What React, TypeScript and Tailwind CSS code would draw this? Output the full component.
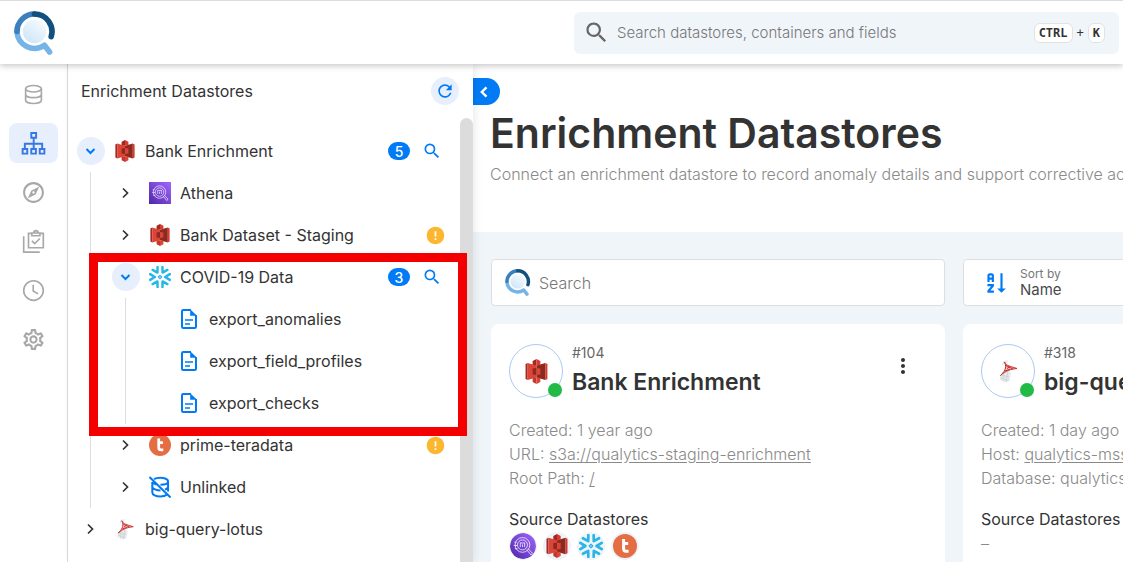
import { useId } from "react";
import type { ReactNode } from "react";
import {
  MdError,
  MdMoreVert,
  MdOutlineExplore,
  MdOutlineSettings,
  MdRefresh,
  MdSearch,
} from "react-icons/md";

type IconProps = { className?: string };

function Logo({ className }: IconProps) {
  const id = useId();
  return (
    <svg className={className} viewBox="0 0 42 44" fill="none" aria-hidden="true">
      <defs>
        <linearGradient id={id} x1="0" y1="1" x2="0.7" y2="0">
          <stop offset="0" stopColor="#c9e3f8" />
          <stop offset="1" stopColor="#f4f9fe" />
        </linearGradient>
      </defs>
      <circle cx="20.5" cy="20.5" r="11.7" fill={`url(#${id})`} />
      <g strokeWidth="5.6" strokeLinecap="round" strokeLinejoin="round">
        <path d="M3 20.5A17.5 17.5 0 0 0 30.4 34.2L35.6 41" stroke="#76b3e6" />
        <path d="M3 20.5A17.5 17.5 0 0 1 20.5 3" stroke="#3a80bf" />
        <path d="M20.5 3A17.5 17.5 0 0 1 37.2 25.6" stroke="#12507f" />
      </g>
    </svg>
  );
}

function ChevronIcon({ className, direction }: IconProps & { direction: "right" | "down" | "left" }) {
  const paths = {
    right: "M7 5.500L11.500 10L7 14.500",
    down: "M5.500 8L9.500 12L13.500 8",
    left: "M11.500 5.300L6.800 10L11.500 14.700",
  };
  return (
    <svg
      className={className}
      viewBox="0 0 20 20"
      fill="none"
      stroke="currentColor"
      strokeWidth={direction === "left" ? 2.4 : direction === "down" ? 2 : 1.7}
      aria-hidden="true"
    >
      <path d={paths[direction]} />
    </svg>
  );
}

function S3Icon({ className }: IconProps) {
  return (
    <svg className={className} viewBox="0 0 24 24" aria-hidden="true">
      <path d="M1.5 4.800L3.500 3.800V20.200L1.500 19.200Z" fill="#a5281f" />
      <path d="M22.500 4.800L20.500 3.800V20.200L22.500 19.200Z" fill="#d93a30" />
      <path d="M3.500 3.800L12 6.200V17.800L3.500 20.200Z" fill="#dd4438" />
      <path d="M20.500 3.800L12 6.200V17.800L20.500 20.200Z" fill="#8c2a20" />
      <path d="M12 0L8.300 2V5.600L12 6.400Z" fill="#a5281f" />
      <path d="M12 0L15.700 2V5.600L12 6.400Z" fill="#d93a30" />
      <path d="M12 24L8.300 22V18.400L12 17.600Z" fill="#c5362b" />
      <path d="M12 24L15.700 22V18.400L12 17.600Z" fill="#dd4438" />
      <path d="M12 8.600L8.300 9.200V14.800L12 15.400Z" fill="#8c2a20" />
      <path d="M12 8.600L15.700 9.200V14.800L12 15.400Z" fill="#dd4438" />
    </svg>
  );
}

function AthenaIcon({ className }: IconProps) {
  const id = useId();
  return (
    <svg className={className} viewBox="0 0 24 24" fill="none" aria-hidden="true">
      <defs>
        <linearGradient id={id} x1="0" y1="1" x2="1" y2="0">
          <stop offset="0" stopColor="#4d27a8" />
          <stop offset="1" stopColor="#a166ff" />
        </linearGradient>
      </defs>
      <path d="M0 0H24V24H0Z" fill={`url(#${id})`} />
      <g stroke="#f0e6ff" strokeWidth="0.8">
        <circle cx="11.500" cy="11" r="6.800" />
        <circle cx="11.500" cy="11" r="4.600" />
        <path d="M9.500 9V13M13.500 9V13M9.500 9.200H13.500M11.500 10.500V13M4 8.500H6M3.500 11.500H6.500M4.500 14.500H7" />
        <path d="M15.500 15.500L19.300 20.200L20.800 18.800L16.800 14.500" />
      </g>
    </svg>
  );
}

function TeradataIcon({ className }: IconProps) {
  return (
    <svg className={className} viewBox="0 0 24 24" aria-hidden="true">
      <circle cx="12" cy="12" r="12" fill="#e56d43" />
      <path
        d="M10.600 5V14.600Q10.600 17.300 13.300 17.300H15.600M10.600 9.400H15.200"
        fill="none"
        stroke="#fff"
        strokeWidth="3"
      />
    </svg>
  );
}

function SqlServerIcon({ className }: IconProps) {
  return (
    <svg className={className} viewBox="0 0 24 24" fill="none" aria-hidden="true">
      <path d="M8 2L12 1L10 6M5 15L12 12L15 14L13.500 22L9 23.500L3.500 20.500Z" fill="#e6eaec" />
      <path
        d="M8 2L6.500 6M5 16L13 18M4.500 18.500L12.500 21.500M8 14L7 22M12 12L10 23"
        stroke="#c5cbce"
        strokeWidth="0.700"
      />
      <path d="M8.500 3C10 7 15 7.500 21 9.500C15 10 9 12 4.500 16.500C8 12.500 11 9.500 8.500 3Z" fill="#e9b6b5" />
      <path
        d="M8.500 3C10 7 15 7.500 21 9.500C15 10 9 12 4.500 16.500C8 13 11.500 9 8.500 3M10 6.500L17 10M11 9.500L14 7.500M9 12L14 10.300"
        stroke="#c8312f"
        strokeWidth="1"
      />
    </svg>
  );
}

const snowflakeArms = [0, 60, 120, 180, 240, 300];

function SnowflakeIcon({ className }: IconProps) {
  return (
    <svg className={className} viewBox="0 0 24 24" fill="none" stroke="#29b5e8" strokeLinecap="round" strokeLinejoin="round" aria-hidden="true">
      {snowflakeArms.map((angle) => (
        <path key={angle} d="M22.700 8.900L17.600 12L22.700 15.100" strokeWidth="2.700" transform={`rotate(${angle} 12 12)`} />
      ))}
      <path d="M12 10.200L13.800 12L12 13.800L10.200 12Z" strokeWidth="1.300" />
    </svg>
  );
}

function UnlinkedIcon({ className }: IconProps) {
  return (
    <svg className={className} viewBox="0 0 24 24" fill="none" stroke="#007bf5" strokeWidth="2.200" aria-hidden="true">
      <path d="M3.600 6.500V18C3.600 20.400 7.500 22.300 12.300 22.300C15.500 22.300 18.200 21.500 19.700 20.200M5.500 3.400C7 2.400 9.500 1.800 12.300 1.800C17 1.800 20.800 3.600 20.800 5.800V17M20.800 6C20.800 8 17.500 9.500 12.500 9.600M3.600 6.500C4.500 7.800 6 8.700 8 9.200M3.600 12.500C5.500 14.800 8.500 15.800 12.500 15.800M20.800 12.200C20.200 13.400 19 14.200 17.500 14.800" />
      <path d="M0.500 1L23.500 23.500" />
    </svg>
  );
}

function FileIcon({ className }: IconProps) {
  return (
    <svg className={className} viewBox="0 0 24 24" fill="none" aria-hidden="true">
      <path d="M14 3H6.300Q5 3 5 4.300V19.700Q5 21 6.300 21H17.700Q19 21 19 19.700V8" stroke="#007bf5" strokeWidth="2" />
      <path d="M13.200 2.200L20 8.800H13.200Z" fill="#007bf5" />
      <path d="M8 13H16M8 17H13" stroke="#007bf5" strokeWidth="1.700" />
    </svg>
  );
}

function SortIcon({ className }: IconProps) {
  return (
    <svg className={className} viewBox="0 0 24 24" fill="#007bf5" aria-hidden="true">
      <path d="M19 17H22L18 21L14 17H17V3H19M11 13V15L7.670 19H11V21H5V19L8.330 15H5V13M9 3H7C5.900 3 5 3.900 5 5V11H7V9H9V11H11V5C11 3.900 10.110 3 9 3M9 7H7V5H9Z" />
    </svg>
  );
}

function DatabaseIcon({ className }: IconProps) {
  return (
    <svg className={className} viewBox="0 0 26 26" fill="none" stroke="currentColor" strokeWidth="1.700" aria-hidden="true">
      <ellipse cx="13" cy="7" rx="8.200" ry="3.400" />
      <path d="M4.800 7V19C4.800 20.900 8.500 22.300 13 22.300S21.200 20.900 21.200 19V7M4.800 13C4.800 14.900 8.500 16.300 13 16.300S21.200 14.900 21.200 13" />
    </svg>
  );
}

function SitemapIcon({ className }: IconProps) {
  return (
    <svg className={className} viewBox="0 0 26 26" fill="none" stroke="currentColor" strokeWidth="2" aria-hidden="true">
      <path d="M10.700 2H15.700V7H10.700ZM1.700 18.700H6.500V23.500H1.700ZM10.700 18.700H15.500V23.500H10.700ZM19.500 18.700H24.300V23.500H19.500ZM13.200 7.500V18.500M4 18.500V13.300H22V18.500" />
    </svg>
  );
}

function ChecksIcon({ className }: IconProps) {
  return (
    <svg className={className} viewBox="0 0 26 26" fill="none" stroke="currentColor" strokeWidth="1.700" aria-hidden="true">
      <path d="M2.800 7.500V24H19.500" />
      <path d="M11 4.500H7.800V19.500H23.200V4.500H20" />
      <path d="M11.300 4.200H19.700V7H11.300ZM13.300 4.200C13.300 0.900 17.700 0.900 17.700 4.200" />
      <path d="M11.300 12.300L14.300 15.200L19.600 9.900" />
    </svg>
  );
}

function ClockIcon({ className }: IconProps) {
  return (
    <svg className={className} viewBox="0 0 26 26" fill="none" stroke="currentColor" strokeWidth="1.700" aria-hidden="true">
      <circle cx="13" cy="13" r="10.200" />
      <path d="M12.700 7V13.500L17.800 16.500" />
    </svg>
  );
}

const navItems: { label: string; icon: ReactNode; active?: boolean }[] = [
  { label: "Datastores", icon: <DatabaseIcon className="size-[25px]" /> },
  { label: "Enrichment", icon: <SitemapIcon className="size-[25px]" />, active: true },
  { label: "Explore", icon: <MdOutlineExplore className="size-[25px]" /> },
  { label: "Checks", icon: <ChecksIcon className="size-[25px]" /> },
  { label: "Activity", icon: <ClockIcon className="size-[25px]" /> },
  { label: "Settings", icon: <MdOutlineSettings className="size-[25px]" /> },
];

type RowProps = {
  label: string;
  icon: ReactNode;
  indent: string;
  open?: boolean;
  count?: number;
  warning?: boolean;
};

function TreeRow({ label, icon, indent, open, count, warning }: RowProps) {
  return (
    <div className={`flex h-[42px] items-center gap-[9px] ${indent}`}>
      <button
        aria-label={`Toggle ${label}`}
        aria-expanded={!!open}
        className={`flex size-7 shrink-0 items-center justify-center rounded-full ${open ? "bg-[#e8effc] text-[#007bf5]" : "text-[#333]"}`}
      >
        <ChevronIcon direction={open ? "down" : "right"} className="size-5" />
      </button>
      {icon}
      <span className="flex-1 whitespace-nowrap">{label}</span>
      {count !== undefined && (
        <span className="flex items-center gap-3 pr-[18px]">
          <span className="flex h-[18px] w-[22px] items-center justify-center rounded-full bg-[#007bf5] text-[14px] font-medium text-white">
            {count}
          </span>
          <button aria-label={`Search in ${label}`} className="text-[#007bf5]">
            <MdSearch className="size-5" />
          </button>
        </span>
      )}
      {warning && <MdError className="mr-[14px] size-[21px] text-[#fdb62f]" aria-label="Warning" />}
    </div>
  );
}

function LeafRow({ label }: { label: string }) {
  return (
    <li className="flex h-[42px] items-center gap-2 pl-[51px]">
      <FileIcon className="size-6" />
      <span>{label}</span>
    </li>
  );
}

type CardProps = { number: string; name: string; icon: ReactNode; details: ReactNode; sources: ReactNode };

function DatastoreCard({ number, name, icon, details, sources }: CardProps) {
  return (
    <article className="w-[454px] shrink-0 rounded-t-lg bg-white px-[18px] pt-5">
      <div className="flex items-center gap-[9px]">
        <div className="relative flex size-[54px] shrink-0 items-center justify-center rounded-full border border-[#abc9f5]">
          {icon}
          <span className="absolute right-0 bottom-0 size-[14px] rounded-full bg-[#21ba45]" />
        </div>
        <div className="flex-1 whitespace-nowrap">
          <div className="text-[14px] leading-[18px] text-[#666]">{number}</div>
          <h2 className="mt-1 text-[23px] leading-8 font-semibold">{name}</h2>
        </div>
        <button aria-label={`Options for ${name}`} className="mr-3 -mt-[10px]">
          <MdMoreVert className="size-6" />
        </button>
      </div>
      <div className="mt-5 leading-6 font-light whitespace-nowrap text-[#8a8a8a]">{details}</div>
      <h3 className="mt-[17px] leading-6">Source Datastores</h3>
      {sources}
    </article>
  );
}

function SourceBadge({ children }: { children: ReactNode }) {
  return (
    <span className="flex size-7 items-center justify-center overflow-hidden rounded-full border border-[#eaf2f9] bg-[#f0f5fa]">
      {children}
    </span>
  );
}

export default function App() {
  return (
    <div className="flex h-screen flex-col overflow-hidden bg-white font-['Inter',sans-serif] text-[16px] text-[#333]">
      <header className="z-10 flex h-16 shrink-0 items-center justify-between border-t border-[#dcdcdc] bg-white pr-1 pl-[14px] shadow-[0_2px_6px_rgba(0,0,0,0.22)]">
        <Logo className="h-[44px] w-[42px]" />
        <label className="flex h-[42px] w-[545px] items-center rounded-md bg-[#f0f5fa] pr-[14px] pl-[9px]">
          <MdSearch className="size-[27px] text-[#666]" />
          <input
            aria-label="Search datastores, containers and fields"
            placeholder="Search datastores, containers and fields"
            className="ml-[7px] h-6 min-w-0 flex-1 bg-transparent text-[15px] font-light outline-none placeholder:text-[#777]"
          />
          <span className="flex items-center gap-1 font-['DejaVu_Sans_Mono',monospace] text-[12px]">
            <kbd className="rounded-md border border-[#e2e2e2] bg-white px-1 font-[inherit] leading-[18px] font-bold">CTRL</kbd>
            +
            <kbd className="rounded-md border border-[#e2e2e2] bg-white px-1 font-[inherit] leading-[18px] font-bold">K</kbd>
          </span>
        </label>
      </header>

      <div className="flex min-h-0 flex-1">
        <nav className="flex w-[68px] shrink-0 flex-col items-center gap-[9px] border-r border-[#dcdcdc] pt-[10px] text-[#a8a8a8]">
          {navItems.map((item) => (
            <a
              key={item.label}
              href="#"
              aria-label={item.label}
              className={`flex h-10 w-[49px] shrink-0 items-center justify-center rounded-lg ${item.active ? "bg-[#e8effc] text-[#3578e5]" : ""}`}
            >
              {item.icon}
            </a>
          ))}
        </nav>

        <aside className="z-[1] flex w-[405px] shrink-0 flex-col bg-white shadow-[2px_0_8px_rgba(0,0,0,0.08)]">
          <div className="flex h-[53px] shrink-0 items-center justify-between pr-[14px] pl-[13px]">
            <h2>Enrichment Datastores</h2>
            <button aria-label="Refresh" className="flex size-7 items-center justify-center rounded-full bg-[#e8effc] text-[#007bf5]">
              <MdRefresh className="size-5" />
            </button>
          </div>
          <div className="flex min-h-0 flex-1">
            <ul className="flex-1 pt-[13px]">
              <li>
                <TreeRow label="Bank Enrichment" icon={<S3Icon className="h-6 w-[22px]" />} indent="pl-[9px]" open count={5} />
                <ul className="ml-[22px] border-l border-[#dedede]">
                  <li>
                    <TreeRow label="Athena" icon={<AthenaIcon className="size-[22px]" />} indent="pl-[21px]" />
                  </li>
                  <li>
                    <TreeRow label="Bank Dataset - Staging" icon={<S3Icon className="h-6 w-[22px]" />} indent="pl-[21px]" warning />
                  </li>
                  <li className="relative">
                    <TreeRow label="COVID-19 Data" icon={<SnowflakeIcon className="size-[22px]" />} indent="pl-[21px]" open count={3} />
                    <ul className="ml-[34px] border-l border-[#dedede]">
                      <LeafRow label="export_anomalies" />
                      <LeafRow label="export_field_profiles" />
                      <LeafRow label="export_checks" />
                    </ul>
                    <div className="pointer-events-none absolute -top-[3px] -right-[7px] -bottom-[12px] -left-[2px] border-[9px] border-[#f40000]" />
                  </li>
                  <li>
                    <TreeRow label="prime-teradata" icon={<TeradataIcon className="size-[22px]" />} indent="pl-[21px]" warning />
                  </li>
                  <li>
                    <TreeRow label="Unlinked" icon={<UnlinkedIcon className="size-[22px]" />} indent="pl-[21px]" />
                  </li>
                </ul>
              </li>
              <li>
                <TreeRow label="big-query-lotus" icon={<SqlServerIcon className="size-[22px]" />} indent="pl-[9px]" />
              </li>
            </ul>
            <div className="mt-px w-[13px] rounded-t-full bg-[#dcdcdc]" />
          </div>
        </aside>

        <main className="flex min-w-0 flex-1 flex-col overflow-hidden bg-[#f0f5fa]">
          <div className="bg-white pt-[14px] pb-[46px]">
            <button aria-label="Collapse panel" className="flex h-[27px] w-[27px] items-center justify-center rounded-r-full bg-[#007bf5] pr-1 text-white">
              <ChevronIcon direction="left" className="size-5" />
            </button>
            <h1 className="mt-1 pl-[17px] text-[41px] leading-[48px] font-semibold whitespace-nowrap">Enrichment Datastores</h1>
            <p className="mt-[5px] pl-[17px] leading-6 font-light whitespace-nowrap text-[#8a8a8a]">
              Connect an enrichment datastore to record anomaly details and support corrective actions
            </p>
          </div>
          <div className="flex gap-[18px] px-[18px] pt-[27px]">
            <label className="flex h-[47px] w-[454px] shrink-0 items-center gap-2 rounded-[4px] border border-[#dedede] bg-white pl-[13px]">
              <Logo className="h-[27px] w-[26px]" />
              <input aria-label="Search" placeholder="Search" className="min-w-0 flex-1 font-light outline-none placeholder:text-[#777]" />
            </label>
            <button className="flex h-[47px] w-[454px] shrink-0 items-center gap-3 rounded-[4px] border border-[#dedede] bg-white pl-[18px] text-left">
              <SortIcon className="size-[26px]" />
              <span>
                <span className="block text-[12px] leading-[14px] text-[#777]">Sort by</span>
                <span className="block text-[15px] leading-[18px] text-[#4a4a4a]">Name</span>
              </span>
            </button>
          </div>
          <div className="flex min-h-0 flex-1 gap-[18px] px-[18px] pt-[18px]">
            <DatastoreCard
              number="#104"
              name="Bank Enrichment"
              icon={<S3Icon className="h-[27px] w-[25px]" />}
              details={
                <>
                  <p>Created: 1 year ago</p>
                  <p>
                    URL: <a href="#" className="underline underline-offset-2">s3a://qualytics-staging-enrichment</a>
                  </p>
                  <p>
                    Root Path: <a href="#" className="underline underline-offset-2">/</a>
                  </p>
                </>
              }
              sources={
                <div className="mt-px flex gap-[6px]">
                  <SourceBadge><AthenaIcon className="size-[26px] shrink-0 rounded-full" /></SourceBadge>
                  <SourceBadge><S3Icon className="size-6" /></SourceBadge>
                  <SourceBadge><SnowflakeIcon className="size-6" /></SourceBadge>
                  <SourceBadge><TeradataIcon className="size-6" /></SourceBadge>
                </div>
              }
            />
            <DatastoreCard
              number="#318"
              name="big-query-lotus"
              icon={<SqlServerIcon className="size-6" />}
              details={
                <>
                  <p>Created: 1 day ago</p>
                  <p>
                    Host: <a href="#" className="underline underline-offset-2">qualytics-mssql</a>
                  </p>
                  <p>Database: qualytics</p>
                </>
              }
              sources={<p className="leading-6 font-light text-[#8a8a8a]">–</p>}
            />
          </div>
        </main>
      </div>
    </div>
  );
}
